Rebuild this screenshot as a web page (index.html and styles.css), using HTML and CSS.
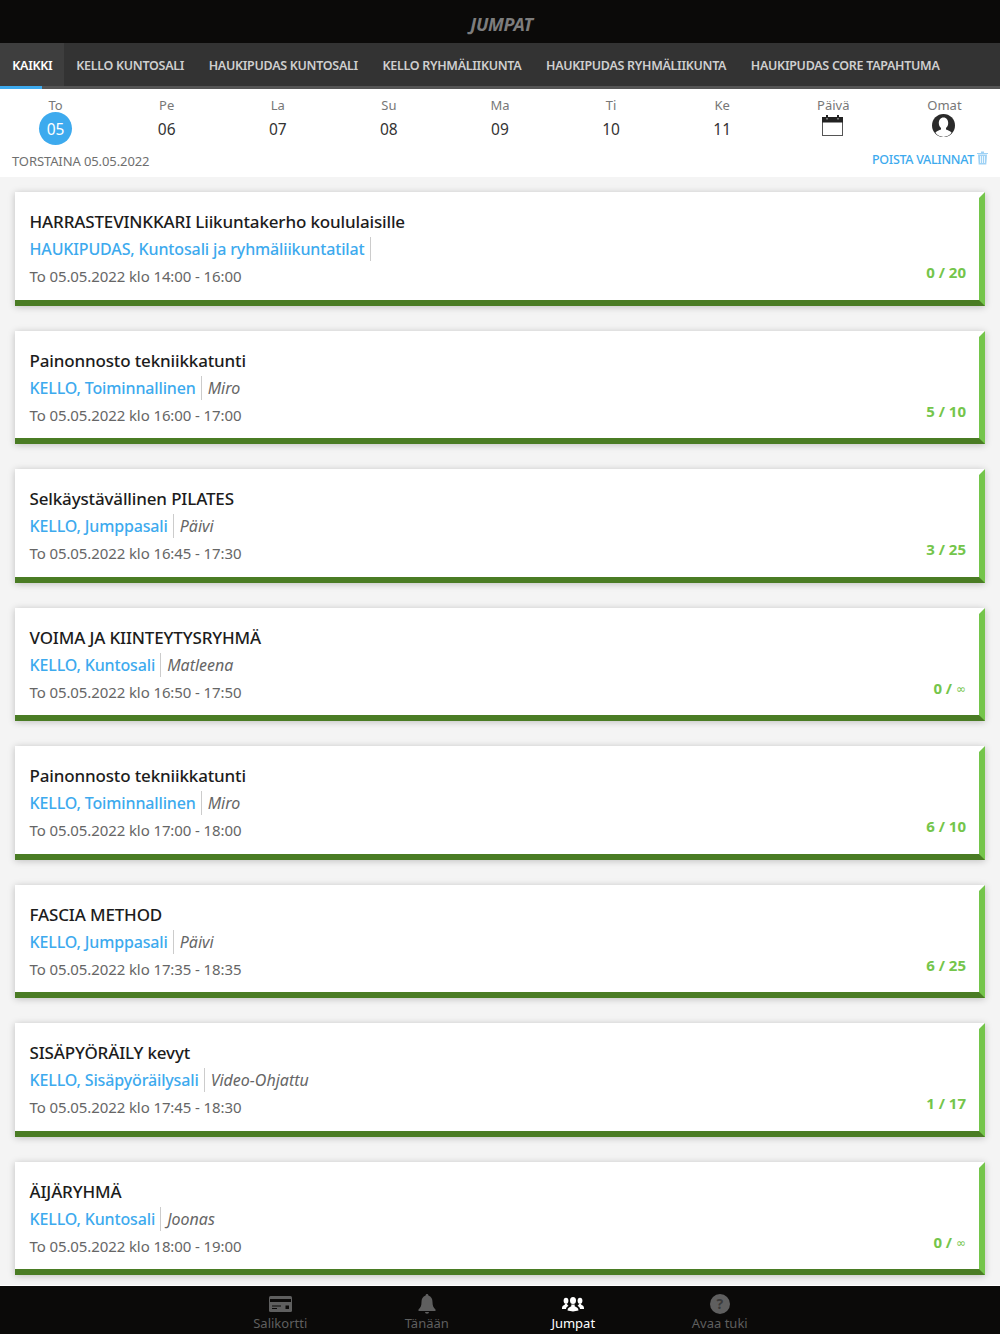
FILE: index.html
```html
<!DOCTYPE html>
<html lang="fi">
<head>
<meta charset="utf-8">
<title>Jumpat</title>
<link rel="stylesheet" href="styles.css">
</head>
<body>
<div class="app">
  <header class="topbar"><h1 class="title">JUMPAT</h1></header>
  <nav class="tabs">
    <a class="tab tab-active">KAIKKI</a>
    <a class="tab">KELLO KUNTOSALI</a>
    <a class="tab">HAUKIPUDAS KUNTOSALI</a>
    <a class="tab">KELLO RYHMÄLIIKUNTA</a>
    <a class="tab">HAUKIPUDAS RYHMÄLIIKUNTA</a>
    <a class="tab">HAUKIPUDAS CORE TAPAHTUMA</a>
  </nav>
  <section class="calendar">
    <div class="days">
      <div class="day"><span class="dname">To</span><span class="dnum dnum-on">05</span></div>
      <div class="day"><span class="dname">Pe</span><span class="dnum">06</span></div>
      <div class="day"><span class="dname">La</span><span class="dnum">07</span></div>
      <div class="day"><span class="dname">Su</span><span class="dnum">08</span></div>
      <div class="day"><span class="dname">Ma</span><span class="dnum">09</span></div>
      <div class="day"><span class="dname">Ti</span><span class="dnum">10</span></div>
      <div class="day"><span class="dname">Ke</span><span class="dnum">11</span></div>
      <div class="day"><span class="dname">Päivä</span>
        <svg class="dicon" width="21" height="21" viewBox="0 0 21 21"><rect x="0.500" y="2.500" width="20" height="18" fill="#fff" stroke="#555"/><rect x="0" y="2" width="21" height="5.500" fill="#222"/><rect x="4" y="0" width="2" height="3" fill="#222"/><rect x="15" y="0" width="2" height="3" fill="#222"/><rect x="4.500" y="3" width="1" height="1.500" fill="#ccc"/><rect x="15.500" y="3" width="1" height="1.500" fill="#ccc"/></svg>
      </div>
      <div class="day"><span class="dname">Omat</span>
        <svg class="dicon dicon-user" width="23" height="23" viewBox="0 0 23 23"><circle cx="11.500" cy="11.500" r="11.500" fill="#2b2b2b"/><path d="M11.500 3.500C8.400 3.500 6.800 6 6.800 9c0 2.200.9 4 2.200 5v1.600c-1.800.8-4.200 1.400-5.600 3.200a10 10 0 0 0 16.200 0c-1.400-1.800-3.800-2.400-5.600-3.200V14c1.300-1 2.200-2.800 2.200-5 0-3-1.600-5.500-4.700-5.500z" fill="#fff"/></svg>
      </div>
    </div>
    <div class="selrow">
      <span class="seldate">TORSTAINA 05.05.2022</span>
      <a class="clear">POISTA VALINNAT
        <svg class="trash" width="11" height="14" viewBox="0 0 11 14"><path d="M0 2h11v1H0zM4 0.500h3V2H4z" fill="#9fd2f5"/><path d="M1 3.500h9l-.7 10H1.700z" fill="#9fd2f5"/><path d="M3.500 5v7M5.500 5v7M7.500 5v7" stroke="#fff" stroke-width=".8"/></svg>
      </a>
    </div>
  </section>
  <main class="list">
    <article class="card"><div class="card-body"><h2 class="ctitle">HARRASTEVINKKARI Liikuntakerho koululaisille</h2><p class="cplace"><span class="loc">HAUKIPUDAS, Kuntosali ja ryhmäliikuntatilat</span><span class="coach"></span></p><div class="cfoot"><span class="ctime">To 05.05.2022 klo 14:00 - 16:00</span><span class="cnt">0 / 20</span></div></div></article>
    <article class="card"><div class="card-body"><h2 class="ctitle">Painonnosto tekniikkatunti</h2><p class="cplace"><span class="loc">KELLO, Toiminnallinen</span><span class="coach">Miro</span></p><div class="cfoot"><span class="ctime">To 05.05.2022 klo 16:00 - 17:00</span><span class="cnt">5 / 10</span></div></div></article>
    <article class="card"><div class="card-body"><h2 class="ctitle">Selkäystävällinen PILATES</h2><p class="cplace"><span class="loc">KELLO, Jumppasali</span><span class="coach">Päivi</span></p><div class="cfoot"><span class="ctime">To 05.05.2022 klo 16:45 - 17:30</span><span class="cnt">3 / 25</span></div></div></article>
    <article class="card"><div class="card-body"><h2 class="ctitle">VOIMA JA KIINTEYTYSRYHMÄ</h2><p class="cplace"><span class="loc">KELLO, Kuntosali</span><span class="coach">Matleena</span></p><div class="cfoot"><span class="ctime">To 05.05.2022 klo 16:50 - 17:50</span><span class="cnt">0 / <span class="inf">∞</span></span></div></div></article>
    <article class="card"><div class="card-body"><h2 class="ctitle">Painonnosto tekniikkatunti</h2><p class="cplace"><span class="loc">KELLO, Toiminnallinen</span><span class="coach">Miro</span></p><div class="cfoot"><span class="ctime">To 05.05.2022 klo 17:00 - 18:00</span><span class="cnt">6 / 10</span></div></div></article>
    <article class="card"><div class="card-body"><h2 class="ctitle">FASCIA METHOD</h2><p class="cplace"><span class="loc">KELLO, Jumppasali</span><span class="coach">Päivi</span></p><div class="cfoot"><span class="ctime">To 05.05.2022 klo 17:35 - 18:35</span><span class="cnt">6 / 25</span></div></div></article>
    <article class="card"><div class="card-body"><h2 class="ctitle">SISÄPYÖRÄILY kevyt</h2><p class="cplace"><span class="loc">KELLO, Sisäpyöräilysali</span><span class="coach">Video-Ohjattu</span></p><div class="cfoot"><span class="ctime">To 05.05.2022 klo 17:45 - 18:30</span><span class="cnt">1 / 17</span></div></div></article>
    <article class="card"><div class="card-body"><h2 class="ctitle">ÄIJÄRYHMÄ</h2><p class="cplace"><span class="loc">KELLO, Kuntosali</span><span class="coach">Joonas</span></p><div class="cfoot"><span class="ctime">To 05.05.2022 klo 18:00 - 19:00</span><span class="cnt">0 / <span class="inf">∞</span></span></div></div></article>
  </main>
  <footer class="bottom">
    <a class="bt"><svg class="bi" width="23" height="20" viewBox="0 0 23 20"><g transform="translate(0 2)"><rect width="23" height="16" rx="1.500" fill="#5f5f5f"/><rect x="1" y="3" width="21" height="3" fill="#0b0a09"/><rect x="3" y="9.500" width="9" height="1" fill="#0b0a09"/><rect x="3" y="12" width="5" height="1" fill="#0b0a09"/><rect x="16.500" y="9.500" width="3.500" height="3.500" fill="#0b0a09"/></g></svg><span class="blabel">Salikortti</span></a>
    <a class="bt"><svg class="bi" width="18" height="20" viewBox="0 0 18 20"><path d="M9 0c.9 0 1.400.6 1.400 1.500C13.300 2.300 14.500 5 14.500 8c0 3.800.9 5.600 3 7.500V17H.5v-1.500c2.100-1.900 3-3.700 3-7.500 0-3 1.200-5.700 4.100-6.500C7.600.6 8.100 0 9 0z" fill="#5f5f5f"/><path d="M7 18h4a2 1.800 0 0 1-4 0z" fill="#5f5f5f"/></svg><span class="blabel">Tänään</span></a>
    <a class="bt bt-active"><svg class="bi" width="22" height="20" viewBox="0 0 22 20"><g fill="#fff" transform="translate(0 3)"><ellipse cx="11" cy="3.500" rx="3" ry="3.500"/><path d="M5.500 13.500c0-2.500 2-3.300 3.800-4.200V7.500h3.400v1.800c1.800.9 3.800 1.700 3.800 4.200L11 14.500z"/><ellipse cx="4" cy="3.800" rx="2.400" ry="3"/><path d="M0 11c0-2 1.500-2.500 2.800-3.200V6.500h2.400v1.300l1.300 1C5 9.700 4 10.500 4 12L0 12z"/><ellipse cx="18" cy="3.800" rx="2.400" ry="3"/><path d="M22 11c0-2-1.500-2.500-2.800-3.200V6.500h-2.400v1.300l-1.300 1c1.500.9 2.500 1.700 2.500 3.200L22 12z"/></g></svg><span class="blabel">Jumpat</span></a>
    <a class="bt"><span class="help">?</span><span class="blabel">Avaa tuki</span></a>
  </footer>
</div>
</body>
</html>
```
FILE: styles.css
```css
* { box-sizing: border-box; }
html, body { margin: 0; padding: 0; height: 100%; }
body { font-family: "Noto Sans", "Open Sans", sans-serif; background: #f4f4f4; color: #222; }
.app { height: 1334px; display: flex; flex-direction: column; overflow: hidden; }

.topbar { height: 43px; flex: none; background: #0b0a09; display: flex; align-items: center; justify-content: center; padding: 5px 0 0 3px; }
.title { margin: 0; font-size: 18px; font-weight: 700; font-style: italic; color: #7d7d7d; letter-spacing: -0.3px; }

.tabs { height: 46px; flex: none; background: #333; border-bottom: 3px solid #555; display: flex; position: relative; }
.tab { padding: 0 12.300px; height: 43px; line-height: 45px; font-size: 12.500px; font-weight: 600; color: #cfcfcf; white-space: nowrap; letter-spacing: -0.3px; }
.tab-active { background: #3e3e3e; color: #fff; position: relative; width: 64px; }
.tab-active::after { content: ""; position: absolute; left: 0; bottom: -3px; width: 42px; height: 3px; background: #3daaee; }

.calendar { flex: none; height: 88px; background: #fff; position: relative; }
.days { display: grid; grid-template-columns: repeat(9, 1fr); padding-top: 8px; height: 62px; }
.day { display: flex; flex-direction: column; align-items: center; }
.dname { font-size: 13px; line-height: 16px; color: #777; }
.dnum { width: 33px; height: 33px; margin-top: -1px; border-radius: 50%; display: flex; align-items: center; justify-content: center; font-size: 15.500px; color: #333; }
.dnum-on { background: #3daaee; color: #fff; }
.dicon { margin: 2px 0 0 -2px; display: block; }
.dicon-user { margin: 1px 0 0 -2px; }
.selrow { display: flex; justify-content: space-between; align-items: flex-start; padding: 0 12px 0; }
.seldate { font-size: 13px; line-height: 20px; color: #6f6f6f; letter-spacing: -0.1px; }
.clear { font-size: 12.500px; line-height: 18px; font-weight: 500; color: #3daaee; display: flex; align-items: flex-start; gap: 3px; letter-spacing: -0.3px; }

.list { flex: 1 1 0; min-height: 0; overflow: hidden; padding: 15px 15px 0; display: flex; flex-direction: column; gap: 25px; }
.card { flex: none; height: 113.500px; background: #fff; border-top: 6px solid #fff; border-right: 6px solid #74c54b; border-bottom: 6px solid #4a7c24; box-shadow: 0 1px 7px rgba(0,0,0,.22); }
.card-body { padding: 12px 13px 0 14.500px; height: 100%; display: flex; flex-direction: column; }
.ctitle { margin: 0; font-size: 17px; line-height: 24px; font-weight: 500; color: #1c1c1c; letter-spacing: -0.15px; }
.cplace { margin: 3px 0 0; font-size: 16px; line-height: 24px; display: flex; align-items: center; }
.loc { color: #3daaee; font-weight: 500; padding-right: 5px; border-right: 1px solid #ccc; letter-spacing: -0.14px; }
.coach { color: #666; font-style: italic; padding-left: 6px; }
.coach:empty { padding: 0; }
.cfoot { display: flex; justify-content: space-between; align-items: center; margin-top: 3px; }
.ctime { font-size: 15px; line-height: 24px; color: #666; letter-spacing: -0.1px; }
.cnt { font-size: 15px; font-weight: 700; color: #74c54b; margin-top: -8px; }
.inf { font-family: "DejaVu Sans", sans-serif; font-weight: 400; font-size: 12px; position: relative; top: -1px; }

.bottom { height: 48px; flex: none; background: #0b0a09; display: flex; justify-content: center; position: relative; box-shadow: 0 -1px 0 #fff; }
.bt { width: 146.500px; display: flex; flex-direction: column; align-items: center; padding-top: 8px; color: #5f5f5f; font-size: 13px; line-height: 18px; }
.bi { display: block; }
.blabel { margin-top: 0; }
.bt-active { color: #fff; }
.help { width: 20px; height: 20px; border-radius: 50%; background: #5f5f5f; color: #3a3a3a; font-size: 14px; line-height: 20px; text-align: center; font-weight: 700; }
```
